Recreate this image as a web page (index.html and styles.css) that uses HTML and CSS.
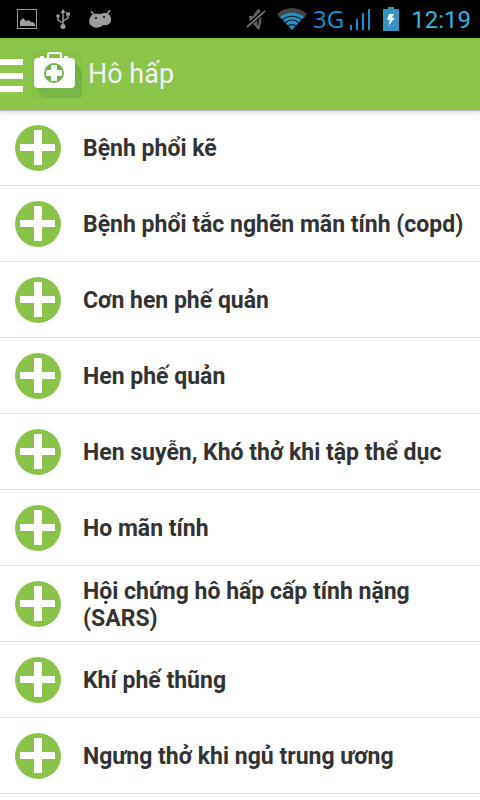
FILE: index.html
```html
<!DOCTYPE html>
<html lang="vi">
<head>
<meta charset="utf-8">
<meta name="viewport" content="width=device-width, initial-scale=1">
<title>Hô hấp</title>
<link rel="stylesheet" href="styles.css">
</head>
<body>
<svg class="defs" aria-hidden="true">
  <symbol id="plus" viewBox="0 0 46 46">
    <circle cx="23" cy="23" r="23" fill="#8bc34a"/>
    <path d="M19 5h8v14h13v7H27v14h-8V26H5v-7h14z" fill="#fff"/>
  </symbol>
</svg>
<div class="status">
  <div class="status-group notices">
    <svg width="20" height="20" viewBox="0 0 20 20" fill="#9c9c9c"><path d="M0 0h20v20H0zM1 1v18h18V1z" fill-rule="evenodd"/><path d="M3 17v-5l3-3 3 3 3-1 2 2h2l2 2v2z"/></svg>
    <svg width="14" height="20" viewBox="0 0 14 20" fill="none" stroke="#9c9c9c" stroke-width="1.4"><path d="M7 3v13M7 14l-5-3V8M7 12l5-3V5"/><path d="M4.500 4L7 0l2.500 4z" fill="#9c9c9c" stroke="none"/><circle cx="7" cy="17.500" r="2.500" fill="#9c9c9c" stroke="none"/><circle cx="2" cy="7" r="1.800" fill="#9c9c9c" stroke="none"/><path d="M10 3.500h4v3h-4z" fill="#9c9c9c" stroke="none"/></svg>
    <svg width="22" height="18" viewBox="0 0 22 18"><path d="M2 1l3 4M21 0l-3 4" stroke="#9c9c9c" stroke-width="1.500"/><path d="M2 6C5 3 9 4 12 4c4-2 9-1 10 4 1 5-3 8-8 7-3 3-8 4-11 1C0 15-1 10 2 6z" fill="#9c9c9c"/><circle cx="7" cy="8" r="1"/><circle cx="15" cy="7" r="1"/></svg>
  </div>
  <div class="status-group">
    <svg width="20" height="22" viewBox="0 0 20 22"><path d="M3 8h4l4-6 3-1v20h-2l-5-5H4z" fill="#626262"/><path d="M12 3c3 3 3 14 0 17-3-3-3-14 0-17z" fill="#222" stroke="#626262" stroke-width="2"/><path d="M0 19L19 3" stroke="#000" stroke-width="4"/><path d="M1 19L19 3" stroke="#8a8a8a" stroke-width="1.500"/></svg>
    <svg class="wifi" width="30" height="24" viewBox="0 0 30 24"><path d="M0 7C8-1 22-1 30 7l-3 4C20 4 10 4 3 11z" fill="#444"/><path d="M3 10C10 4 20 4 27 10L15 23z" fill="#2b8fbe"/><path d="M5 13c6-5 14-5 20 0M8 16c4-4 10-4 14 0M11 19c3-2 5-2 8 0" fill="none" stroke="#001722" stroke-width="1.200"/></svg>
    <span class="network">3G</span>
    <svg class="signal" width="21" height="22" viewBox="0 0 21 22" fill="#0d93d8"><path d="M0 17h2v5H0zM6 11h2v11H6zM12 5h2v17h-2zM18 1h2v21h-2z"/></svg>
    <svg class="battery" width="16" height="24" viewBox="0 0 16 24"><path d="M5 0h6v2h5v22H0V2h5z" fill="#3594bd"/><path d="M6 7h5l-2 4h3l-7 8 2-6H4z" fill="#eaf6fc"/></svg>
    <time class="clock">12:19</time>
  </div>
</div>
<header class="bar">
  <button class="menu" aria-label="Menu"><svg width="23" height="33" viewBox="0 0 23 33" fill="#fff"><path d="M0 0h23v6H0zM0 14h23v6H0zM0 27h23v6H0z"/></svg></button>
  <svg class="logo" width="51" height="48" viewBox="0 0 51 48">
    <defs><linearGradient id="shade" x1="0" y1="0" x2="0" y2="1"><stop offset="0" stop-color="#6cad43"/><stop offset="1" stop-color="#79b94a"/></linearGradient></defs>
    <path d="M0 0h51v48H0z" fill="#88c148"/>
    <path d="M43 11l8 11v26H13L4 36z" fill="url(#shade)"/>
    <rect x="3" y="8" width="41" height="30" rx="4" fill="#fff"/>
    <path d="M9 9V7q0-1 1-1h2q1 0 1 1v2M33 9V7q0-1 1-1h2q1 0 1 1v2" fill="#fff"/>
    <path d="M17 8V5q0-2 2-2h9q2 0 2 2v3" fill="none" stroke="#fff" stroke-width="2"/>
    <circle cx="23" cy="23" r="10" fill="#72b348"/>
    <path d="M20 15h6v5h5v6h-5v5h-6v-5h-5v-6h5z" fill="#fff"/>
  </svg>
  <h1>Hô hấp</h1>
</header>
<ul class="list">
  <li><a href="#"><svg class="icon"><use href="#plus"/></svg><span>Bệnh phổi kẽ</span></a></li>
  <li><a href="#"><svg class="icon"><use href="#plus"/></svg><span>Bệnh phổi tắc nghẽn mãn tính (copd)</span></a></li>
  <li><a href="#"><svg class="icon"><use href="#plus"/></svg><span>Cơn hen phế quản</span></a></li>
  <li><a href="#"><svg class="icon"><use href="#plus"/></svg><span>Hen phế quản</span></a></li>
  <li><a href="#"><svg class="icon"><use href="#plus"/></svg><span>Hen suyễn, Khó thở khi tập thể dục</span></a></li>
  <li><a href="#"><svg class="icon"><use href="#plus"/></svg><span>Ho mãn tính</span></a></li>
  <li><a href="#"><svg class="icon"><use href="#plus"/></svg><span>Hội chứng hô hấp cấp tính nặng (SARS)</span></a></li>
  <li><a href="#"><svg class="icon"><use href="#plus"/></svg><span>Khí phế thũng</span></a></li>
  <li><a href="#"><svg class="icon"><use href="#plus"/></svg><span>Ngưng thở khi ngủ trung ương</span></a></li>
</ul>
</body>
</html>
```
FILE: styles.css
```css
* {
  box-sizing: border-box;
}

body {
  margin: 0;
  background: #fff;
  color: #333;
  font-family: Roboto, "Noto Sans", sans-serif;
}

svg {
  display: block;
  flex: none;
}

.defs {
  position: absolute;
  width: 0;
  height: 0;
}

.status {
  display: flex;
  justify-content: space-between;
  align-items: center;
  height: 38px;
  padding: 0 9px 0 17px;
  background: #000;
}

.status-group {
  display: flex;
  align-items: center;
}

.notices {
  gap: 19px;
}

.wifi {
  margin-left: 11px;
}

.network {
  margin-left: 6px;
  color: #0d93d8;
  font: 24px/38px "Open Sans", sans-serif;
}

.signal {
  margin-left: 6px;
}

.battery {
  margin: 0 12px 0 12px;
}

.clock {
  padding-top: 2px;
  color: #33b5e5;
  font-size: 24px;
  line-height: 36px;
}

.bar {
  display: flex;
  align-items: center;
  height: 72px;
  background: #8bc54a;
  box-shadow: 0 1px 1px #b5b5b5, 0 2px 6px rgba(0, 0, 0, 0.15);
  position: relative;
}

.menu {
  padding: 2px 0 0;
  border: 0;
  background: none;
}

.logo {
  margin-left: 8px;
}

h1 {
  margin: 0 0 0 6px;
  color: #f3f3f3;
  font-size: 27px;
  font-weight: 400;
  line-height: 36px;
}

.list {
  margin: 0;
  padding: 0;
  list-style: none;
}

.list a {
  display: flex;
  align-items: center;
  gap: 22px;
  min-height: 76px;
  padding: 0 12px 0 15px;
  border-bottom: 1px solid #e0e0e0;
  color: #333;
  font-size: 23px;
  font-weight: 700;
  line-height: 27px;
  text-decoration: none;
}

.list span {
  padding-top: 2px;
}

.icon {
  width: 46px;
  height: 46px;
}
```
